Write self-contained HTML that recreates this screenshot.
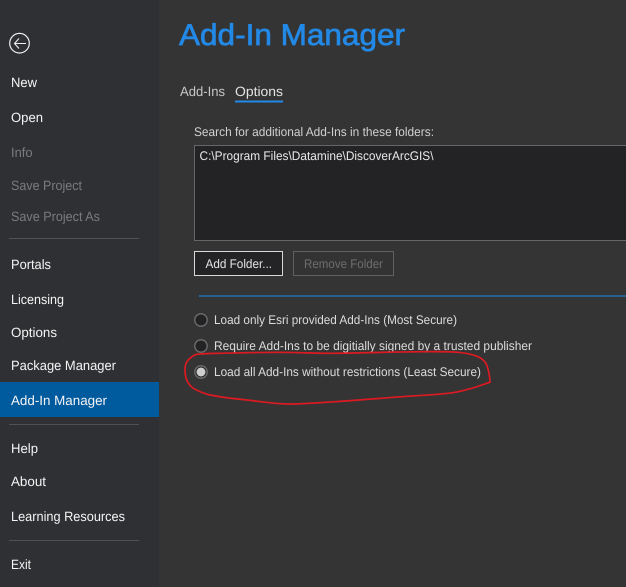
<!DOCTYPE html>
<html><head><meta charset="utf-8"><style>
html,body{margin:0;padding:0;background:#333;width:626px;height:587px;overflow:hidden}
svg{display:block}
text{font-family:"Liberation Sans",sans-serif;font-size:13.5px;fill:#e4e4e4;text-rendering:geometricPrecision}
.s{fill:#f4f4f4}.d{fill:#7b7b7c}
.r{font-size:12.5px;fill:#dcdcdc}
</style></head><body>
<svg width="626" height="587" viewBox="0 0 626 587" xmlns="http://www.w3.org/2000/svg">
<rect width="626" height="587" fill="#343434"/>
<rect width="159" height="587" fill="#2f3033"/>
<circle cx="19.5" cy="43.2" r="9.8" fill="none" stroke="#f0f0f0" stroke-width="1.2"/>
<path d="M14.5 43.5H26M19 38.5L14.5 43.5L19 48.5" fill="none" stroke="#f0f0f0" stroke-width="1.1"/>
<g>
<text class="s" x="11" y="87" textLength="26" lengthAdjust="spacingAndGlyphs">New</text>
<text class="s" x="11" y="122" textLength="32" lengthAdjust="spacingAndGlyphs">Open</text>
<text class="d" x="11" y="157" textLength="21.5" lengthAdjust="spacingAndGlyphs">Info</text>
<text class="d" x="11" y="190" textLength="71" lengthAdjust="spacingAndGlyphs">Save Project</text>
<text class="d" x="11" y="221" textLength="89" lengthAdjust="spacingAndGlyphs">Save Project As</text>
<rect x="9" y="238" width="130" height="1" fill="#505154"/>
<text class="s" x="11" y="269" textLength="40" lengthAdjust="spacingAndGlyphs">Portals</text>
<text class="s" x="11" y="304" textLength="53" lengthAdjust="spacingAndGlyphs">Licensing</text>
<text class="s" x="11" y="337" textLength="46" lengthAdjust="spacingAndGlyphs">Options</text>
<text class="s" x="11" y="370" textLength="105" lengthAdjust="spacingAndGlyphs">Package Manager</text>
<rect x="0" y="382" width="159" height="35" fill="#005a9e"/>
<text class="s" x="11" y="405" textLength="96" lengthAdjust="spacingAndGlyphs">Add-In Manager</text>
<rect x="9" y="424" width="130" height="1" fill="#505154"/>
<text class="s" x="11" y="453" textLength="27" lengthAdjust="spacingAndGlyphs">Help</text>
<text class="s" x="11" y="486" textLength="35" lengthAdjust="spacingAndGlyphs">About</text>
<text class="s" x="11" y="521" textLength="114" lengthAdjust="spacingAndGlyphs">Learning Resources</text>
<rect x="9" y="540" width="130" height="1" fill="#505154"/>
<text class="s" x="11" y="569" textLength="20" lengthAdjust="spacingAndGlyphs">Exit</text>
</g>
<text x="179" y="45" textLength="226" lengthAdjust="spacingAndGlyphs" style="font-size:30px;fill:#2389e6;stroke:#2389e6;stroke-width:.7">Add-In Manager</text>
<text x="180" y="96" textLength="45" lengthAdjust="spacingAndGlyphs" style="fill:#c8c8c8">Add-Ins</text>
<text x="235" y="96" textLength="48" lengthAdjust="spacingAndGlyphs">Options</text>
<rect x="235" y="100.5" width="48" height="2" fill="#2389e6"/>
<text class="r" x="194" y="136" textLength="240" lengthAdjust="spacingAndGlyphs" style="fill:#d0d0d0">Search for additional Add-Ins in these folders:</text>
<rect x="194.5" y="145.5" width="440" height="95" fill="#232325" stroke="#666"/>
<text class="r" x="199.5" y="160" textLength="234" lengthAdjust="spacingAndGlyphs" style="fill:#e8e8e8">C:\Program Files\Datamine\DiscoverArcGIS\</text>
<rect x="194.5" y="251.5" width="88" height="24" fill="#242426" stroke="#d8d8d8"/>
<text class="r" x="205.5" y="268" textLength="66.5" lengthAdjust="spacingAndGlyphs" style="fill:#e4e4e4">Add Folder...</text>
<rect x="293.5" y="251.5" width="100" height="24" fill="#333" stroke="#606060"/>
<text class="r" x="304" y="268" textLength="79" lengthAdjust="spacingAndGlyphs" style="fill:#6e6e6e">Remove Folder</text>
<rect x="199" y="295" width="427" height="2" fill="#28618f"/>
<circle cx="201" cy="320" r="6.2" fill="#232325" stroke="#707070" stroke-width="1.3"/>
<circle cx="201" cy="346" r="6.2" fill="#232325" stroke="#707070" stroke-width="1.3"/>
<circle cx="201" cy="372" r="6.2" fill="#232325" stroke="#707070" stroke-width="1.3"/>
<circle cx="201" cy="372" r="4.5" fill="#cfcfcf"/>
<text class="r" x="214" y="324" textLength="243" lengthAdjust="spacingAndGlyphs">Load only Esri provided Add-Ins (Most Secure)</text>
<text class="r" x="214" y="350" textLength="318" lengthAdjust="spacingAndGlyphs">Require Add-Ins to be digitially signed by a trusted publisher</text>
<text class="r" x="214" y="376" textLength="267" lengthAdjust="spacingAndGlyphs">Load all Add-Ins without restrictions (Least Secure)</text>
<path d="M185 370C185 365 186 362 188.3 360C191 357 194 355 196.7 354.3C204 353.5 212 353.5 220 353.3C240 352.8 260 352.3 280 352.3C300 352.3 320 353.5 335 353.3C365 353 395 351.8 425 351.7C437 351.6 448 351.5 458 352.3C466 353 473 354.5 478 356.7C483 359 485.5 362 486.7 365C488.5 370 489.8 377 490 382.3C484 384 478 386.5 471.7 388.3C464 390.5 456 392.5 448 393.3C433 395 417 395.5 402 396.7C380 398.3 357 400.3 335 401.7C320 402.7 305 404 290 404C276 404 261 401.5 246.7 400C234 398.7 222 397.3 210 395C204 393.5 198 391 193.3 388.3C190 386 188 383 186.7 380C185.5 377 185 373 185 370Z" fill="none" stroke="#dc1a22" stroke-width="1.7"/>
</svg>
</body></html>
